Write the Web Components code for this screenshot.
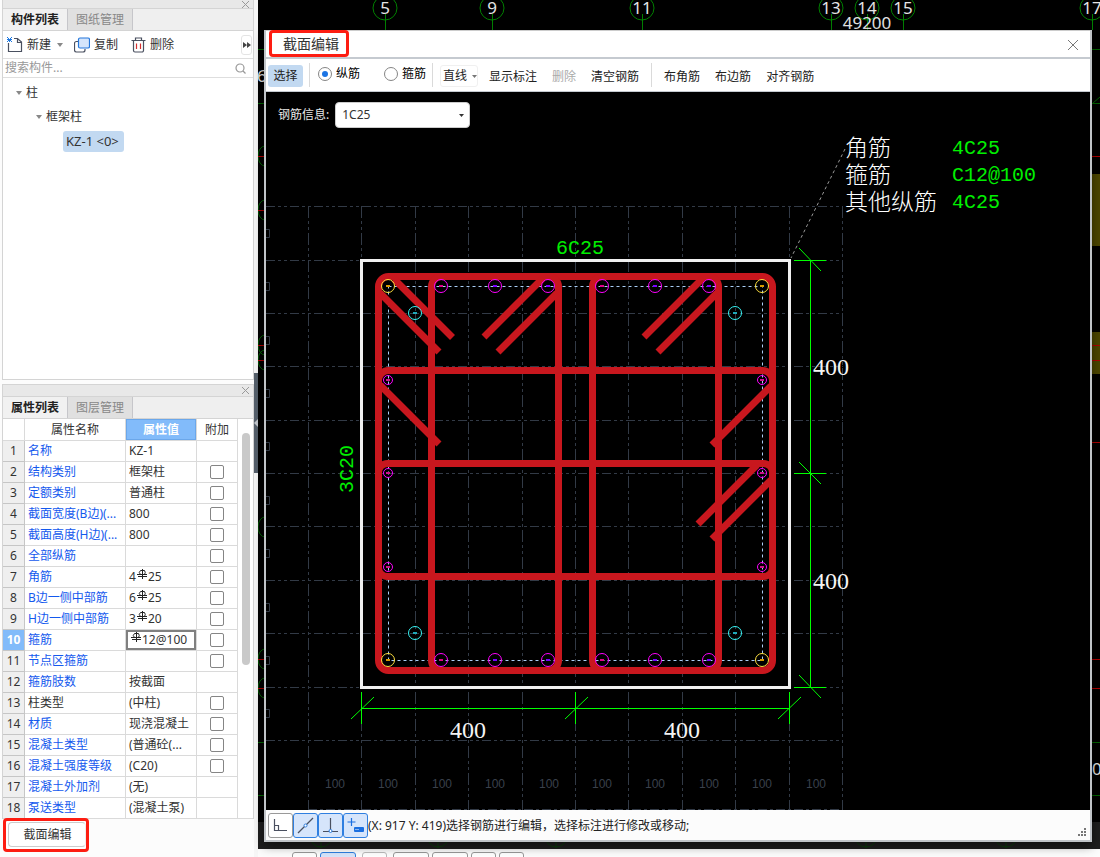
<!DOCTYPE html>
<html lang="zh-CN">
<head>
<meta charset="utf-8">
<title>截面编辑</title>
<style>
html, body { margin: 0; height: 100%; }
body { font: 12px/20px "Noto Sans", "Noto Sans CJK SC", sans-serif; color: #333; background: #fcfcfc; overflow: hidden; }
</style>
</head>
<body>
<app-shell>
  <side-panel slot="side" class="grow" id="components" first="构件列表" second="图纸管理">
    <component-tools></component-tools>
    <component-tree></component-tree>
  </side-panel>
  <side-panel slot="side" id="properties" first="属性列表" second="图层管理">
    <property-table></property-table>
  </side-panel>
  <section-launcher slot="side"></section-launcher>
  <plan-backdrop slot="work"></plan-backdrop>
  <section-dialog slot="dialog">
    <section-toolbar slot="tools"></section-toolbar>
    <section-drawing></section-drawing>
    <section-status slot="foot"></section-status>
  </section-dialog>
</app-shell>

<script>
const BASE = `
  *, *::before, *::after { box-sizing: border-box; }
  button, input, select { font: inherit; color: inherit; margin: 0; }
  button { background: none; border: 0; padding: 0; white-space: nowrap; }
  svg { display: block; flex: none; }
`;
function define(name, css, html) {
  customElements.define(name, class extends HTMLElement {
    constructor() {
      super();
      const root = this.attachShadow({ mode: 'open' });
      root.innerHTML = `<style>${BASE}${css}</style>${typeof html === 'function' ? html(this) : html}`;
    }
  });
}

/* Application frame: side column, splitter, drawing area */
define('app-shell', `
  :host { display: grid; grid-template-columns: 254px 4px minmax(0, 1fr); height: 100vh; position: relative; }
  .side { display: flex; flex-direction: column; gap: 4px; padding-left: 2px; min-height: 0; }
  .split { padding-top: 373px; background: #f6f6f6; }
  .handle { display: grid; place-items: center; width: 4px; height: 100px; background: #56606c; }
  .work { display: grid; grid-template-rows: minmax(0, 1fr) 8px; position: relative; min-height: 0; }
  .bar { display: flex; align-items: flex-start; gap: 3px; padding: 3px 0 0 34px; background: #fcfcfc; overflow: hidden; }
  .bar button { height: 24px; flex: none; border: 1px solid #999; border-radius: 3px; background: #fff; width: 25px; }
  .bar .wide { width: 36px; }
  .bar .on { border-color: #2f7fe0; background: #d6e5fb; }
  .bar .gap { margin: 0 3px; border-color: #bbb; }
  ::slotted([slot=dialog]) { position: absolute; inset: 30px 8px 15px 6px; }
  ::slotted(.grow) { flex: 1; min-height: 0; }
`, `
  <div class="side"><slot name="side"></slot></div>
  <div class="split"><div class="handle"><svg width="4" height="8"><path d="M4 0V8L0 4Z" fill="#c4c8ce"/></svg></div></div>
  <div class="work">
    <slot name="work"></slot>
    <div class="bar">
      <button type="button" aria-label="正交"></button><button type="button" class="wide on" aria-label="捕捉"></button>
      <button type="button" class="gap" aria-label="交点"></button><button type="button" class="wide" aria-label="垂点"></button>
      <button type="button" class="wide" aria-label="中点"></button><button type="button" aria-label="顶点"></button>
      <button type="button" aria-label="坐标"></button>
    </div>
    <slot name="dialog"></slot>
  </div>
`);

/* Docked panel with two tabs */
define('side-panel', `
  :host { display: flex; flex-direction: column; border: 1px solid #d4d4d4; background: #fff; }
  :host(#components) { border-top: 0; }
  :host(#properties) { border-bottom: 0; }
  :host(#components) .grip { height: 8px; }
  :host(#components) .grip svg { margin-top: -3px; }
  .grip { display: flex; justify-content: flex-end; height: 11px; background: #e8e8e8; overflow: hidden; padding: 1px 3px 0 0; flex: none; }
  .grip button { height: 9px; }
  .tabs { display: flex; height: 23px; flex: none; background: #efefef; border-top: 1px solid #d4d4d4; border-bottom: 1px solid #d4d4d4; }
  .tabs button { width: 65px; color: #888; background: #e0e0e0; border-right: 1px solid #c6c6ca; }
  .tabs .on { color: #222; font-weight: 700; background: #f1f1f1; }
  ::slotted(component-tree) { flex: 1; }
`, el => `
  <div class="grip"><button type="button" aria-label="关闭"><svg width="9" height="9"><path d="M1 1L8 8M8 1L1 8" stroke="#999" fill="none"/></svg></button></div>
  <div class="tabs"><button type="button" class="on">${el.getAttribute('first')}</button><button type="button">${el.getAttribute('second')}</button></div>
  <slot></slot>
`);

define('component-tools', `
  :host { display: block; }
  .tools { display: flex; align-items: center; height: 28px; padding: 0 1px 0 4px; border-bottom: 1px solid #dedede; }
  .tools button { display: flex; align-items: center; gap: 4px; height: 20px; }
  .tools .copy { margin-left: 11px; }
  .tools .del { margin-left: 13px; }
  .arrow { margin: 0 0 0 2px; }
  .tools .more { margin-left: auto; width: 11px; height: 20px; justify-content: center; border: 1px solid #e4e4e4; border-radius: 3px; }
  .find { display: flex; align-items: center; height: 19px; padding: 0 7px 0 2px; border-bottom: 1px solid #dedede; }
  input { flex: 1; min-width: 0; border: 0; padding: 0; height: 18px; outline: 0; background: none; }
  input::placeholder { color: #999; opacity: 1; }
`, `
  <div class="tools">
    <button type="button"><svg width="16" height="16" fill="none"><path d="M1.500 6V14.500H14.500V5L10.500 1.500H7M10.500 1.500V5.500H14.500" stroke="#4a5060" stroke-width="1.200"/><path d="M0 0h1v1h1v1h1V1h1V0h1v1h-1v1h1v1h-1v1h1v1h-1V4H3v1H2V4H1v1H0V4h1V3H0V2h1V1H0z" fill="#1e78e0"/></svg>新建
      <svg class="arrow" width="6" height="4"><path d="M0 0H6L3 4Z" fill="#888"/></svg></button>
    <button type="button" class="copy"><svg width="16" height="16" fill="none"><path d="M4 4.500H2.500a2 2 0 0 0-2 2V13a2 2 0 0 0 2 2H9a2 2 0 0 0 2-2v-1" stroke="#4a5060" stroke-width="1.200"/><rect x="4.500" y="1" width="11" height="10" rx="1.500" fill="#d5e5fb" stroke="#2477dc" stroke-width="1.200"/></svg>复制</button>
    <button type="button" class="del"><svg width="15" height="16" fill="none" stroke="#4a5060" stroke-width="1.200"><path d="M.5 3.500H14.500M4.500 3V1H10.500V3M2.500 4V13.500a1.500 1.500 0 0 0 1.500 1.500H11a1.500 1.500 0 0 0 1.500-1.500V4"/><path d="M5.500 6.500V12M9.500 6.500V12" stroke="#d43030"/></svg>删除</button>
    <button type="button" class="more" aria-label="更多"><svg width="8" height="6"><path d="M0 0L4 3L0 6ZM4 0L8 3L4 6Z" fill="#444"/></svg></button>
  </div>
  <div class="find"><input type="text" placeholder="搜索构件..." aria-label="搜索构件">
    <svg width="11" height="11" fill="none" stroke="#999" stroke-width="1.200"><circle cx="5" cy="5" r="4"/><path d="M8 8L10.500 10.500"/></svg></div>
`);

define('component-tree', `
  :host { display: block; }
  ul { list-style: none; margin: 0; padding: 0 0 0 20px; }
  :host > ul { padding: 3px 0 0 13px; }
  .row { display: flex; align-items: center; gap: 4px; height: 24px; }
  .pick { font-size: 13px; line-height: 21px; padding: 0 5px 0 3px; margin-left: 7px; border-radius: 3px; background: #c2d9f1; }
`, `
  <ul role="tree">
    <li role="treeitem"><div class="row"><svg width="6" height="4"><path d="M0 0H6L3 4Z" fill="#888"/></svg>柱</div>
      <ul role="group"><li role="treeitem"><div class="row"><svg width="6" height="4"><path d="M0 0H6L3 4Z" fill="#888"/></svg>框架柱</div>
        <ul role="group"><li role="treeitem"><div class="row"><span class="pick">KZ-1 &lt;0&gt;</span></div></li></ul>
      </li></ul>
    </li>
  </ul>
`);

const REBAR = '<svg class="bar" width="10" height="10" fill="none" stroke="#222"><path d="M5.500 0V10M0 5.500H10M1 7.500H10"/><path d="M3.500 1.500H7.500Q9 3.500 7.500 5.500H3.500Q1 3.500 3.500 1.500Z"/></svg>';
/* name, value, has tick box, black name */
const PROPS = [
  ['名称', 'KZ-1', 0], ['结构类别', '框架柱', 1], ['定额类别', '普通柱', 1],
  ['截面宽度(B边)(...', '800', 1], ['截面高度(H边)(...', '800', 1], ['全部纵筋', '', 1],
  ['角筋', `4${REBAR}25`, 1], ['B边一侧中部筋', `6${REBAR}25`, 1], ['H边一侧中部筋', `3${REBAR}20`, 1],
  ['箍筋', `${REBAR}12@100`, 1], ['节点区箍筋', '', 1], ['箍筋肢数', '按截面', 0],
  ['柱类型', '(中柱)', 1, 1], ['材质', '现浇混凝土', 1], ['混凝土类型', '(普通砼(...', 1],
  ['混凝土强度等级', '(C20)', 1], ['混凝土外加剂', '(无)', 0], ['泵送类型', '(混凝土泵)', 0]
];
define('property-table', `
  :host { display: grid; grid-template-columns: 235px 1fr; border-bottom: 1px solid #dadada; }
  table { border-collapse: separate; border-spacing: 0; table-layout: fixed; width: 235px; }
  th, td { height: 21px; padding: 0; line-height: 20px; font-weight: 400; border: solid #dadada; border-width: 0 1px 1px 0; white-space: nowrap; overflow: hidden; }
  thead th { height: 22px; line-height: 21px; }
  tr > :first-child { width: 22px; }
  tr > :nth-child(2) { width: 101px; }
  tr > :nth-child(3) { width: 71px; }
  tbody th { background: #efefef; border-color: #c6c6c6; }
  tbody tr:last-child > * { height: 20px; border-bottom: 0; }
  thead .on { background: #82bbfa; color: #fff; font-weight: 700; box-shadow: inset 0 0 0 1px #6ba7ea; }
  td { padding-left: 3px; }
  .name { color: #1459ee; }
  .plain { color: #333; }
  .tick { padding: 0; text-align: center; }
  .cur th { background: #82bbfa; color: #fff; font-weight: 700; }
  .cur .val { box-shadow: inset 0 0 0 2px #808080; padding-left: 4px; }
  .val .bar { display: inline-block; margin: 0 1px; vertical-align: 2px; }
  input { appearance: none; display: block; width: 14px; height: 14px; margin: 0 auto; border: 1px solid #858585; border-radius: 2px; background: #fff; }
  .scroll { padding: 14px 3px 0 4px; }
  .thumb { width: 8px; height: 232px; border-radius: 4px; background: #c9c9c9; }
`, `
  <table>
    <thead><tr><th></th><th>属性名称</th><th class="on">属性值</th><th>附加</th></tr></thead>
    <tbody>${PROPS.map((p, i) => `<tr${i === 9 ? ' class="cur"' : ''}><th scope="row">${i + 1}</th><td class="name${p[3] ? ' plain' : ''}">${p[0]}</td><td class="val">${p[1]}</td><td class="tick">${p[2] ? `<input type="checkbox" aria-label="附加 ${i + 1}">` : ''}</td></tr>`).join('')}</tbody>
  </table>
  <div class="scroll"><div class="thumb"></div></div>
`);

define('section-launcher', `
  :host { display: block; height: 34px; padding-left: 1px; }
  .mark { width: 86px; height: 34px; margin-top: -5px; border: 3px solid #fd1d12; border-radius: 4px; padding: 1px 0 0 2px; background: #fff; position: relative; }
  button { width: 78px; height: 25px; border: 1px solid #ccc; border-right-color: #eee; border-radius: 4px; padding-left: 1px; }
`, `<div class="mark"><button type="button">截面编辑</button></div>`);

/* Floor plan that lies behind the dialog */
const bubble = (x, t) => `<path d="M${x}.5 14V30" stroke="#008000"/><circle cx="${x}" cy="8" r="12" fill="none" stroke="#008000"/><text x="${x}" y="14" text-anchor="middle">${t}</text>`;
define('plan-backdrop', `
  :host { display: block; min-height: 0; background: #000; overflow: hidden; }
  svg { width: 100%; height: 100%; }
  text { font: 17px "Noto Sans", sans-serif; fill: #e4e4e4; }
`, `
  <svg viewBox="258 0 842 849" preserveAspectRatio="xMinYMin slice" fill="none">
    ${[[385, '5'], [492, '9'], [642, '11'], [831, '13'], [867, '14'], [903, '15'], [1092, '17']].map(b => bubble(...b)).join('')}
    <text x="867" y="29" text-anchor="middle">49200</text>
    <g stroke="#006400"><path d="M258 49.500H264M258 103.500H264M258 742.500H264M258 795.500H264M1092 49.500H1100M1092 103.500H1100M1093 103L1100 97M1092 742.500H1100M1092 795.500H1100"/>
      ${[156, 210, 345, 360, 527, 659, 688].map(y => `<ellipse cx="265" cy="${y}" rx="7" ry="10"/>`).join('')}</g>
    <rect x="1092" y="174" width="8" height="72" fill="#4c4600"/><rect x="1092" y="332" width="8" height="42" fill="#4c4600"/>
    <path d="M258 156.500H264M258 210.500H264M258 345.500H264M258 360.500H264M258 659.500H264M258 688.500H264M1092 156.500H1100M1092 345.500H1100M1092 360.500H1100M1092 442.500H1100M1092 659.500H1100M1092 688.500H1100" stroke="#b00000"/>
    <text x="257" y="82">6</text><text x="1092" y="775">0</text>
    <rect x="258" y="822" width="842" height="27" fill="#1e1e1e"/>
    <g stroke="#0c3c0c">${[321, 438, 556, 866, 1006].map(x => `<circle cx="${x}" cy="836" r="11"/><path d="M${x} 840V848"/>`).join('')}</g>
  </svg>
`);

define('section-dialog', `
  :host { display: grid; grid-template-rows: 27px 35px minmax(0, 1fr) 30px; border: solid #c0c4c8; border-width: 0 2px 2px; background: #fff; box-shadow: 0 4px 10px rgba(0,0,0,.45); }
  header { display: flex; justify-content: space-between; align-items: flex-start; border-top: 1px solid #ccc; padding: 0 11px 0 3px; }
  h1 { margin: -1px 0 0; width: 80px; height: 27px; border: 3px solid #fd1d12; border-radius: 4px; font: inherit; font-size: 14px; line-height: 22px; padding-left: 11px; white-space: nowrap; }
  header button { margin-top: 8px; }
`, `
  <header><h1>截面编辑</h1><button type="button" aria-label="关闭"><svg width="12" height="12"><path d="M1 1L11 11M11 1L1 11" stroke="#777"/></svg></button></header>
  <slot name="tools"></slot><slot></slot><slot name="foot"></slot>
`);

define('section-toolbar', `
  :host { display: flex; align-items: center; padding: 0 2px; border-top: 2px solid #c5cad0; border-bottom: 1px solid #c5cad0; background: #fff; color: #222; }
  button { height: 22px; margin: 3px 0 0 15px; }
  .sel { width: 35px; margin: 2px 0 0; border-radius: 3px; background: #c2d9f1; }
  .rule { width: 1px; height: 24px; background: #dadada; margin: 0 0 0 6px; }
  label { display: flex; align-items: center; gap: 4px; margin: 0 0 2px 8px; color: #000; }
  label + label { margin-left: 24px; }
  input { appearance: none; width: 14px; height: 14px; border: 1px solid #858585; border-radius: 50%; background: #fff; display: grid; place-items: center; }
  input:checked::before { content: ""; width: 6px; height: 6px; border-radius: 50%; background: #1b74e4; }
  .line { display: flex; align-items: center; gap: 5px; margin: 2px 0 0 7px; padding: 0 0 0 2px; border: 1px solid #f0f0f0; border-radius: 3px; }
  .first { margin-left: 11px; }
  .off { color: #aaa; }
  .rule2, .after { margin-left: 12px; }
`, `
  <button type="button" class="sel">选择</button><span class="rule"></span>
  <label><input type="radio" name="kind" checked>纵筋</label><label><input type="radio" name="kind">箍筋</label>
  <span class="rule"></span>
  <button type="button" class="line">直线<svg width="5" height="3"><path d="M0 0H5L2.500 3Z" fill="#777"/></svg></button>
  <button type="button" class="first">显示标注</button><button type="button" class="off" disabled>删除</button><button type="button">清空钢筋</button>
  <span class="rule rule2"></span>
  <button type="button" class="after">布角筋</button><button type="button">布边筋</button><button type="button">对齐钢筋</button>
`);

/* Column section with stirrups, bars and dimensions */
const XS = [308.5, 361.5, 415.5, 468.5, 522.5, 575.5, 628.5, 682.5, 735.5, 789.5, 842.5];
const YS = [206.5, 260.5, 313.5, 366.5, 420.5, 473.5, 526.5, 580.5, 633.5, 687.5, 740.5];
const bar = (x, y, r, c, m) => `<circle cx="${x}" cy="${y}" r="${r}" stroke="${c}"/><path d="M${x - 2} ${y - 1}h4v2h-4z" fill="${m}"/>`;
const bars = [
  ...[388, 762].flatMap(x => [286, 660].map(y => bar(x, y, 6.5, '#ffe040', '#d89a00'))),
  ...[415, 735].flatMap(x => [313, 633].map(y => bar(x, y, 6.5, '#38f4f4', '#20a8b8'))),
  ...[441, 495, 548, 602, 655, 709].flatMap((x, i) => [286, 660].map(y => bar(x, y, 6.5, '#ff00ff', i % 3 ? '#7a00ff' : '#e0008c'))),
  ...[388, 762].flatMap(x => [380, 473, 567].map(y => bar(x, y, 4.5, '#ff00ff', '#d01090')))
].join('');
define('section-drawing', `
  :host { display: block; position: relative; min-height: 0; background: #000; overflow: hidden; }
  .view { width: 100%; height: 100%; }
  .dim { font: 24px "Liberation Serif", serif; fill: #f4f4f4; }
  .code { font: 20px "Liberation Mono", monospace; fill: #00f000; }
  .note { font: 300 23px "Liberation Sans", "Noto Sans CJK SC", sans-serif; fill: #fff; }
  .grid { font: 12px "Liberation Sans", sans-serif; fill: #3a414c; }
  .info { position: absolute; top: 10px; left: 12px; display: flex; align-items: center; gap: 6px; color: #e8e8e8; }
  .combo { display: grid; align-items: center; width: 135px; height: 26px; color: #333; }
  select, .combo svg { grid-area: 1 / 1; }
  select { appearance: none; width: 100%; height: 26px; border: 1px solid #ccc; border-radius: 4px; background: #fff; padding: 0 6px; }
  .combo svg { justify-self: end; margin-right: 6px; pointer-events: none; }
`, `
  <svg class="view" viewBox="266 92 824 718" preserveAspectRatio="xMinYMin meet" fill="none">
    <g stroke="#323a46">
      ${XS.map(x => `<path d="M${x} 206V810" stroke-dasharray="12 3 3 3 3 3"/>`).join('')}
      ${YS.map(y => `<path d="M266 ${y}H843" stroke-dasharray="9 3 3 3 3 3"/>`).join('')}
      <path d="M308 809.500H843" stroke-dasharray="9 3 3 3"/>
      ${[233, 286, 340, 393, 446, 500, 553, 607, 660, 713].map(y => `<path d="M266 ${y - 3.5}H269.500V${y + 4.5}H266"/>`).join('')}
    </g>
    ${XS.slice(0, 10).map(x => `<text class="grid" text-anchor="middle" x="${Math.floor(x + 27)}" y="788">100</text>`).join('')}
    <rect x="361.500" y="260.500" width="428" height="427" stroke="#f0f0f0" stroke-width="3"/>
    <rect x="388.500" y="286.500" width="374" height="374" stroke="#a9cdf5" stroke-dasharray="3 3"/>
    <g stroke="#c8171e" stroke-width="7">
      <rect x="378.500" y="276.500" width="394" height="394" rx="10"/>
      <rect x="431.500" y="276.500" width="127" height="394" rx="10"/>
      <rect x="592.500" y="276.500" width="126" height="394" rx="10"/>
      <rect x="378.500" y="463.500" width="394" height="113" rx="9"/>
      <path d="M378.500 380.500a10 10 0 0 1 10-10H762.500a10 10 0 0 1 10 10"/>
      <path d="M394 279L452.500 337.500M380 293L439 352M380 385L439 444M543 278L484 337M557 293L498 352M703 278L644 337M717 293L658 352M771 386L712 445M757 465L698 524M771 480L712 539"/>
    </g>
    ${bars}
    <path d="M845 149L791 258" stroke="#999" stroke-dasharray="3 3"/>
    <g stroke="#0f0">
      <path d="M810.500 260V688M794 260.500H826M794 473.500H826M794 687.500H826M361 708.500H790M361.500 692V724M575.500 692V724M789.500 692V724"/>
      <path d="M799 248L821 271M799 462L821 484M799 675L821 698M351 719L374 697M565 719L588 697M778 719L801 697"/>
    </g>
    <text class="code" x="556" y="254">6C25</text>
    <text class="code" transform="translate(353 493) rotate(-90)">3C20</text>
    <text class="dim" x="813" y="375">400</text><text class="dim" x="813" y="589">400</text>
    <text class="dim" x="450" y="738">400</text><text class="dim" x="664" y="738">400</text>
    <text class="note" x="845" y="156">角筋</text><text class="note" x="845" y="183">箍筋</text><text class="note" x="845" y="210">其他纵筋</text>
    <text class="code" x="952" y="154">4C25</text><text class="code" x="952" y="181">C12@100</text><text class="code" x="952" y="208">4C25</text>
  </svg>
  <div class="info"><label for="rebar">钢筋信息:</label>
    <div class="combo"><select id="rebar"><option>1C25</option></select><svg width="5" height="3"><path d="M0 0H5L2.500 3Z" fill="#333"/></svg></div></div>
`);

define('section-status', `
  :host { display: flex; align-items: center; background: #fcfcfc; padding: 0 4px 0 2px; color: #222; }
  button { display: grid; place-items: center; width: 25px; height: 25px; border: 1px solid #999; border-radius: 3px; background: #fff; }
  .on { border-color: #2f7fe0; background: #d6e5fb; }
  span { flex: 1; padding-top: 1px; white-space: nowrap; }
  .grip { align-self: flex-end; margin-bottom: 4px; }
`, `
  <button type="button" aria-label="正交"><svg width="15" height="15" fill="none" stroke="#4a5060"><path d="M1.500 1V12.500H14M1.500 7.500H5.500V12" stroke-width="1.200"/></svg></button>
  <button type="button" class="on" aria-label="捕捉"><svg width="17" height="17" fill="none"><path d="M1 16L16 1" stroke="#4a5060" stroke-width="1.200"/><circle cx="8.500" cy="8.500" r="1.500" fill="#fff" stroke="#2f7fe0"/></svg></button>
  <button type="button" class="on" aria-label="垂足"><svg width="17" height="17" fill="none"><path d="M8.500 1V14M1 14.500H16" stroke="#4a5060" stroke-width="1.200"/><circle cx="8.500" cy="14" r="1.500" fill="#fff" stroke="#2f7fe0"/></svg></button>
  <button type="button" class="on" aria-label="动态输入"><svg width="17" height="17" fill="none"><path d="M4.500 1V9M.5 5H8.500" stroke="#1b6fe0" stroke-width="1.200"/><rect x="7" y="10" width="10" height="5" rx="1" fill="#1b6fe0"/><path d="M8.500 12.500h1m1 0h1" stroke="#fff"/></svg></button>
  <span>(X: 917 Y: 419)选择钢筋进行编辑，选择标注进行修改或移动;</span>
  <svg class="grip" width="8" height="8"><path d="M6 0h2v2h-2zM3 3h2v2h-2zM6 3h2v2h-2zM0 6h2v2h-2zM3 6h2v2h-2zM6 6h2v2h-2z" fill="#777"/></svg>
`);
</script>
</body>
</html>
